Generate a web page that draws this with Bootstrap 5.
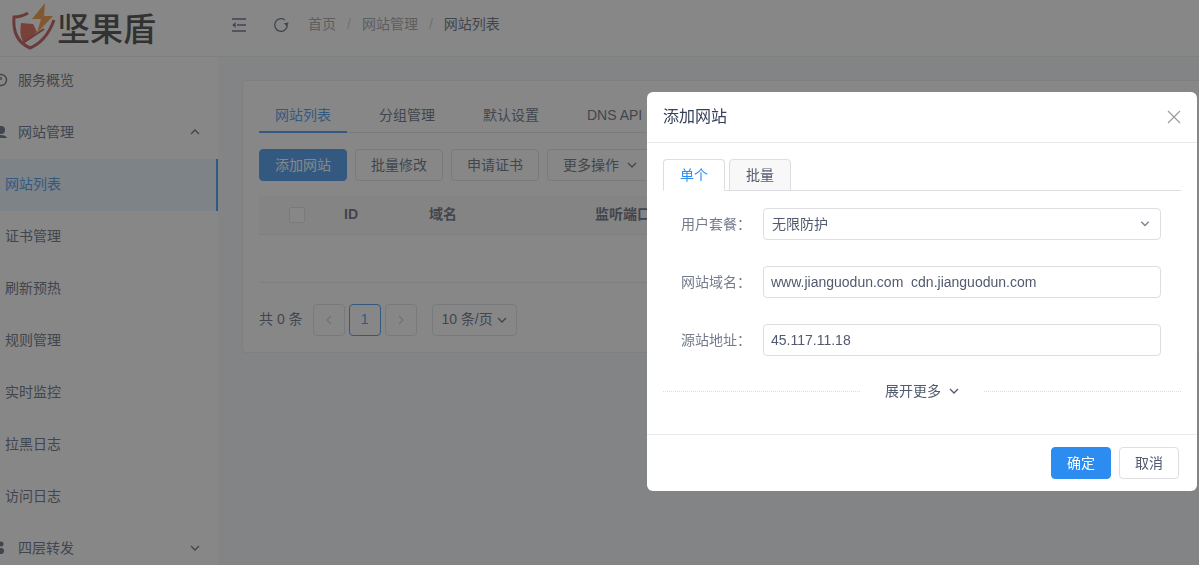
<!DOCTYPE html>
<html lang="zh-CN">
<head>
    <meta charset="UTF-8">
    <meta name="viewport" content="width=device-width, initial-scale=1">
    <title>网站列表</title>
    <link href="https://cdn.jsdelivr.net/npm/bootstrap@5.3.0/dist/css/bootstrap.min.css" rel="stylesheet">
    <style>
        body {
            height: 565px;
            overflow: hidden;
            font-family: "Liberation Sans", "Noto Sans CJK SC", sans-serif;
            font-size: 14px;
            color: #515a6e;
            background-color: #f5f7f9;
        }
        a { text-decoration: none; }

        /* Top bar */
        .top-bar {
            height: 57px;
            background-color: #fff;
            border-bottom: 1px solid #e8eaec;
        }
        .logo { width: 218px; }
        .logo-text {
            font-size: 33px;
            font-weight: 500;
            line-height: 1;
            color: #2b2b2b;
            margin-left: -1px;
            margin-top: 3px;
        }
        .bar-tools { margin-bottom: 7px; margin-left: 14px; }
        .bar-icon { color: #515a6e; }
        .breadcrumb {
            --bs-breadcrumb-margin-bottom: 0;
            --bs-breadcrumb-item-padding-x: 11px;
            --bs-breadcrumb-divider-color: #c5c8ce;
            --bs-breadcrumb-item-active-color: #515a6e;
        }
        .breadcrumb a { color: #999; }

        /* Sidebar */
        .layout { height: 508px; }
        #sidebar {
            width: 218px;
            background-color: #fff;
            overflow: hidden;
        }
        #sidebar .menu { margin-top: -2px; }
        #sidebar a {
            height: 52px;
            color: #515a6e;
            padding-left: 18px;
            padding-right: 17px;
            padding-bottom: 2px;
        }
        #sidebar a.sub { padding-left: 5px; }
        #sidebar a.active {
            color: #2d8cf0;
            background-color: #e6f4fc;
            border-right: 2px solid #2d8cf0;
        }
        .menu-icon { margin-left: -24px; margin-right: 10px; }

        /* Content */
        .content { padding: 23px 0 0 24px; min-width: 0; }
        .list-card {
            margin-right: -6px;
            height: 273px;
            border: 1px solid #e8eaec;
            border-radius: 4px;
            padding: 16px;
            background-color: #fff;
        }
        .page-tabs { border-bottom: 1px solid #dcdee2; height: 36px; gap: 16px; }
        .page-tabs .nav-link {
            color: #515a6e;
            padding: 8px 16px;
            height: 36px;
            line-height: 20px;
        }
        .page-tabs .nav-link.active {
            color: #2d8cf0;
            border-bottom: 2px solid #2d8cf0;
        }
        .btn {
            --bs-btn-font-size: 14px;
            --bs-btn-border-radius: 4px;
            --bs-btn-padding-x: 15px;
            --bs-btn-padding-y: 0;
            height: 32px;
            line-height: 30px;
        }
        .btn-main {
            --bs-btn-color: #fff;
            --bs-btn-bg: #2d8cf0;
            --bs-btn-border-color: #2d8cf0;
        }
        .btn-plain {
            --bs-btn-color: #515a6e;
            --bs-btn-bg: #fff;
            --bs-btn-border-color: #dcdee2;
        }
        .list-table {
            table-layout: fixed;
            margin: 15px 0 0;
            --bs-table-color: #515a6e;
            --bs-table-border-color: #e8eaec;
        }
        .list-table th {
            height: 38px;
            padding: 0 9px;
            vertical-align: middle;
            background-color: #f8f8f9;
        }
        .list-table td { height: 48px; padding: 0; }
        .fake-check {
            display: block;
            width: 16px;
            height: 16px;
            margin: 0 auto;
            background-color: #fff;
            border: 1px solid #dcdee2;
            border-radius: 2px;
        }
        .page-row { margin-top: 21px; }
        .page-box {
            width: 32px;
            height: 32px;
            border: 1px solid #dcdee2;
            border-radius: 4px;
            color: #c5c8ce;
            background-color: #fff;
        }
        .page-box.current { border-color: #2d8cf0; color: #2d8cf0; }
        .page-size {
            width: 85px;
            height: 32px;
            margin-left: 15px;
            border: 1px solid #dcdee2;
            border-radius: 4px;
            background-color: #fff;
        }

        /* Mask and dialog */
        .modal-backdrop { background-color: #373737; }
        .modal-backdrop.show { opacity: .6; }
        .modal-dialog { max-width: 550px; margin: 92px 0 0 647px; }
        .modal-content { border: 0; border-radius: 6px; }
        .modal-header {
            height: 51px;
            padding: 0 16px;
            border-bottom: 1px solid #e8eaec;
            border-radius: 6px 6px 0 0;
        }
        .modal-title { font-size: 16px; color: #35405a; line-height: 24px; font-weight: 400; }
        .close-x { color: #999; margin-right: 0; }
        .modal-body { padding: 16px 16px 0; height: 291px; flex: none; }
        .form-tabs { border-bottom: 1px solid #dcdee2; gap: 4px; height: 32px; }
        .form-tabs .nav-link {
            width: 62px;
            height: 32px;
            padding: 0;
            line-height: 31px;
            text-align: center;
            color: #515a6e;
            background-color: #f8f8f9;
            border: 1px solid #dcdee2;
            border-radius: 4px 4px 0 0;
            margin-bottom: 0;
        }
        .form-tabs .nav-link.active {
            color: #2d8cf0;
            background-color: #fff;
            border-bottom-color: #fff;
        }
        .form-line { margin-bottom: 26px; }
        .form-line:first-of-type { margin-top: 17px; }
        .form-line label {
            width: 100px;
            padding-right: 12px;
            text-align: right;
            flex: none;
            color: #747b8b;
        }
        .form-line label span { font-family: "Noto Sans CJK TC", sans-serif; }
        .form-control, .form-select {
            width: 398px;
            height: 32px;
            font-size: 14px;
            color: #515a6e;
            padding: 0 7px;
            border-color: #dcdee2;
            border-radius: 4px;
        }
        .form-select {
            padding-left: 8px;
            background-image: url("data:image/svg+xml,%3csvg xmlns='http://www.w3.org/2000/svg' viewBox='0 0 16 16'%3e%3cpath fill='none' stroke='%23808695' stroke-width='2' d='M3 5l5 5 5-5'/%3e%3c/svg%3e");
            background-position: right 9px center;
            background-size: 12px 12px;
        }
        .more-line { gap: 25px; margin-top: -3px; height: 24px; }
        .more-line i { flex: 1; border-top: 1px dotted #dcdee2; }
        .modal-footer {
            height: 57px;
            padding: 0 18px 0 0;
            gap: 8px;
            border-top: 1px solid #e8eaec;
        }
        .modal-footer > * { margin: 0; }
        .modal-footer .btn { width: 60px; padding: 0; }
    </style>
</head>
<body>

<!-- Top bar -->
<div class="top-bar d-flex align-items-center">
    <div class="logo d-flex align-items-center">
        <svg width="58" height="56" viewBox="0 0 58 56">
            <path d="M28 13C23 16 19 17 14 17C13 29 16 42 30 48C42 43 49 34 54 20" fill="none" stroke="#b8433f" stroke-width="3"/>
            <path d="M21 23L33 24L37 32C32 37 27 41 24 43C20 38 20 30 21 23Z" fill="#d9503f"/>
            <path d="M23 43L44 29" fill="none" stroke="#b8433f" stroke-width="2"/>
            <path d="M45 3L32 19H41L37 33L53 16H44Z" fill="#f08a24"/>
        </svg>
        <span class="logo-text">坚果盾</span>
    </div>
    <div class="bar-tools d-flex align-items-center">
        <svg class="bar-icon" width="14" height="14" viewBox="0 0 14 14" fill="none" stroke="currentColor" stroke-width="1.3">
            <path d="M0 1H14M5 7H14M0 13H14"/>
            <path d="M3.6 4.2L.2 7L3.6 9.8Z" fill="currentColor" stroke="none"/>
        </svg>
        <svg class="bar-icon" style="margin-left:27px" width="16" height="16" viewBox="0 0 16 16" fill="none" stroke="currentColor" stroke-width="1.3">
            <path d="M14.3 8A6.3 6.3 0 1 1 11.8 3"/>
            <path d="M15.8 5.6L13.8 9.3L10.8 6.3Z" fill="currentColor" stroke="none"/>
        </svg>
        <ol class="breadcrumb" style="margin-left:19px">
            <li class="breadcrumb-item"><a href="#">首页</a></li>
            <li class="breadcrumb-item"><a href="#">网站管理</a></li>
            <li class="breadcrumb-item active">网站列表</li>
        </ol>
    </div>
</div>

<div class="layout d-flex">
    <!-- Sidebar -->
    <div id="sidebar" class="flex-shrink-0">
        <div class="menu">
            <a href="#" class="d-flex align-items-center">
                <svg class="menu-icon" width="14" height="14" viewBox="0 0 14 14" fill="none" stroke="#515a6e" stroke-width="1.4"><circle cx="7" cy="7" r="5.5"/><path d="M7 4V7"/></svg>
                服务概览
            </a>
            <a href="#" class="d-flex align-items-center">
                <svg class="menu-icon" width="14" height="14" viewBox="0 0 14 14" fill="#515a6e"><circle cx="7" cy="5" r="4"/><path d="M1 13C2 9 12 9 13 13Z"/></svg>
                网站管理
                <svg class="ms-auto" width="12" height="12" viewBox="0 0 12 12" fill="none" stroke="#515a6e" stroke-width="1.3"><path d="M2 8L6 4L10 8"/></svg>
            </a>
            <a href="#" class="sub active d-flex align-items-center">网站列表</a>
            <a href="#" class="sub d-flex align-items-center">证书管理</a>
            <a href="#" class="sub d-flex align-items-center">刷新预热</a>
            <a href="#" class="sub d-flex align-items-center">规则管理</a>
            <a href="#" class="sub d-flex align-items-center">实时监控</a>
            <a href="#" class="sub d-flex align-items-center">拉黑日志</a>
            <a href="#" class="sub d-flex align-items-center">访问日志</a>
            <a href="#" class="d-flex align-items-center">
                <svg class="menu-icon" width="14" height="14" viewBox="0 0 14 14" fill="#515a6e"><circle cx="7" cy="3" r="2.5"/><circle cx="7" cy="10" r="3"/></svg>
                四层转发
                <svg class="ms-auto" width="12" height="12" viewBox="0 0 12 12" fill="none" stroke="#515a6e" stroke-width="1.3"><path d="M2 4L6 8L10 4"/></svg>
            </a>
        </div>
    </div>

    <!-- Main Content -->
    <div class="content flex-grow-1">
        <div class="list-card">
            <ul class="nav page-tabs">
                <li class="nav-item"><a class="nav-link active" href="#">网站列表</a></li>
                <li class="nav-item"><a class="nav-link" href="#">分组管理</a></li>
                <li class="nav-item"><a class="nav-link" href="#">默认设置</a></li>
                <li class="nav-item"><a class="nav-link" href="#">DNS API</a></li>
            </ul>
            <div class="d-flex gap-2" style="margin-top:16px">
                <button class="btn btn-main">添加网站</button>
                <button class="btn btn-plain">批量修改</button>
                <button class="btn btn-plain">申请证书</button>
                <button class="btn btn-plain d-flex align-items-center gap-2">更多操作
                    <svg width="10" height="10" viewBox="0 0 10 10" fill="none" stroke="#515a6e" stroke-width="1.3"><path d="M1 3L5 7L9 3"/></svg>
                </button>
            </div>
            <table class="table list-table">
                <colgroup><col style="width:76px"><col style="width:85px"><col style="width:166px"><col></colgroup>
                <thead>
                    <tr><th><span class="fake-check"></span></th><th>ID</th><th>域名</th><th>监听端口</th></tr>
                </thead>
                <tbody>
                    <tr><td colspan="4"></td></tr>
                </tbody>
            </table>
            <div class="page-row d-flex align-items-center">
                <span style="margin-right:10px">共 0 条</span>
                <div class="d-flex gap-1">
                    <span class="page-box d-flex align-items-center justify-content-center">
                        <svg width="10" height="10" viewBox="0 0 10 10" fill="none" stroke="currentColor" stroke-width="1.3"><path d="M7 1L3 5L7 9"/></svg>
                    </span>
                    <span class="page-box current d-flex align-items-center justify-content-center">1</span>
                    <span class="page-box d-flex align-items-center justify-content-center">
                        <svg width="10" height="10" viewBox="0 0 10 10" fill="none" stroke="currentColor" stroke-width="1.3"><path d="M3 1L7 5L3 9"/></svg>
                    </span>
                </div>
                <div class="page-size d-flex align-items-center justify-content-center gap-1">10 条/页
                    <svg width="10" height="10" viewBox="0 0 10 10" fill="none" stroke="#515a6e" stroke-width="1.3"><path d="M1 3L5 7L9 3"/></svg>
                </div>
            </div>
        </div>
    </div>
</div>

<div class="modal-backdrop show"></div>

<!-- Add site dialog -->
<div class="modal d-block" tabindex="-1">
    <div class="modal-dialog">
        <div class="modal-content">
            <div class="modal-header">
                <h5 class="modal-title">添加网站</h5>
                <svg class="close-x ms-auto" width="14" height="14" viewBox="0 0 14 14" fill="none" stroke="currentColor" stroke-width="1.1"><path d="M1 1L13 13M13 1L1 13"/></svg>
            </div>
            <div class="modal-body">
                <ul class="nav form-tabs">
                    <li class="nav-item"><a class="nav-link active" href="#">单个</a></li>
                    <li class="nav-item"><a class="nav-link" href="#">批量</a></li>
                </ul>
                <div class="form-line d-flex align-items-center">
                    <label>用户套餐<span>：</span></label>
                    <select class="form-select"><option>无限防护</option></select>
                </div>
                <div class="form-line d-flex align-items-center">
                    <label>网站域名<span>：</span></label>
                    <input class="form-control" value="www.jianguodun.com  cdn.jianguodun.com">
                </div>
                <div class="form-line d-flex align-items-center">
                    <label>源站地址<span>：</span></label>
                    <input class="form-control" value="45.117.11.18">
                </div>
                <div class="more-line d-flex align-items-center">
                    <i></i>
                    <span class="d-flex align-items-center gap-2">展开更多
                        <svg width="10" height="10" viewBox="0 0 10 10" fill="none" stroke="#515a6e" stroke-width="1.3"><path d="M1 3L5 7L9 3"/></svg>
                    </span>
                    <i></i>
                </div>
            </div>
            <div class="modal-footer">
                <button class="btn btn-main">确定</button>
                <button class="btn btn-plain">取消</button>
            </div>
        </div>
    </div>
</div>

<script src="https://cdn.jsdelivr.net/npm/bootstrap@5.3.0/dist/js/bootstrap.bundle.min.js"></script>

</body>
</html>
